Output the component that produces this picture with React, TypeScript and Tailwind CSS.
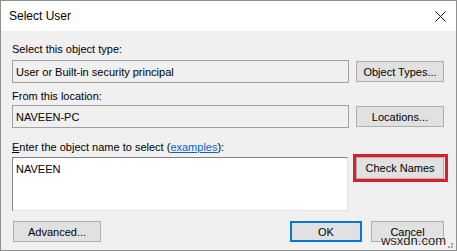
const font = { fontFamily: '"Liberation Sans", Arial, sans-serif' };

function Btn({ label, className = "" }: { label: string; className?: string }) {
  return (
    <div
      className={`flex h-[21px] items-center justify-center border border-[#adadad] bg-[#e1e1e1] text-[11px] text-black ${className}`}
    >
      {label}
    </div>
  );
}

export default function App() {
  return (
    <div
      className="relative flex h-[251px] w-[457px] flex-col overflow-hidden border border-[#8f8f8f] bg-[#f0f0f0] text-black"
      style={font}
    >
      {/* title bar */}
      <div className="flex h-[30px] shrink-0 items-center justify-between bg-white pl-[8px] pr-[10px]">
        <span className="text-[12px]">Select User</span>
        <svg width="11" height="11" viewBox="0 0 11 11" className="mr-[0px]">
          <path d="M0.5 0.5 L10.5 10.5 M10.5 0.5 L0.5 10.5" stroke="#111" strokeWidth="1" />
        </svg>
      </div>

      <div className="flex flex-1 flex-col px-[11px] pt-[11px] text-[11px] leading-[14px]">
        <div>Select this object type:</div>
        <div className="mt-[4px] flex items-start">
          <div className="flex h-[23px] w-[337px] items-center border border-[#a0a0a0] px-[3px]">
            User or Built-in security principal
          </div>
          <Btn label="Object Types..." className="ml-[7px] mt-[1px] w-[88px]" />
        </div>

        <div className="mt-[6px]">From this location:</div>
        <div className="mt-[2px] flex items-start">
          <div className="flex h-[23px] w-[337px] items-center border border-[#a0a0a0] px-[3px]">
            NAVEEN-PC
          </div>
          <Btn label="Locations..." className="ml-[7px] mt-[1px] w-[88px]" />
        </div>

        <div className="mt-[12px]">
          <span className="underline">E</span>nter the object name to select (
          <span className="text-[#0066cc] underline">examples</span>):
        </div>
        <div className="mt-[3px] flex items-start">
          <div className="h-[54px] w-[336px] border border-b-[#e3e3e3] border-l-[#828282] border-r-[#e3e3e3] border-t-[#828282] bg-white px-[3px] pt-[4px]">
            NAVEEN
          </div>
          <div className="relative ml-[8px]">
            <Btn label="Check Names" className="h-[22px] w-[88px]" />
            <div className="pointer-events-none absolute -bottom-[3px] -left-[3px] -right-[4px] -top-[3px] border-[3px] border-[#dc1f2c]" />
          </div>
        </div>

        <div className="mt-[10px] flex items-start">
          <Btn label="Advanced..." className="ml-[1px] w-[88px]" />
          <div className="flex h-[21px] w-[72px] items-center justify-center border-2 border-[#0078d7] bg-[#e1e1e1] text-[11px] ml-[189px]">
            OK
          </div>
          <Btn label="Cancel" className="ml-[9px] w-[73px]" />
        </div>
      </div>

      {/* watermark */}
      <div
        className="absolute bottom-[2px] right-[10px] text-[13px] leading-[14px] text-[#222]"
        style={{ textShadow: "0 0 2px #fff, 0 0 2px #fff" }}
      >
        wsxdn.com
      </div>
      <div className="absolute bottom-[2px] right-[3px] grid grid-cols-2 gap-[1px]">
        <span className="h-[2px] w-[2px]" />
        <span className="h-[2px] w-[2px] bg-[#a0a0a0]" />
        <span className="h-[2px] w-[2px] bg-[#a0a0a0]" />
        <span className="h-[2px] w-[2px] bg-[#a0a0a0]" />
      </div>
    </div>
  );
}
